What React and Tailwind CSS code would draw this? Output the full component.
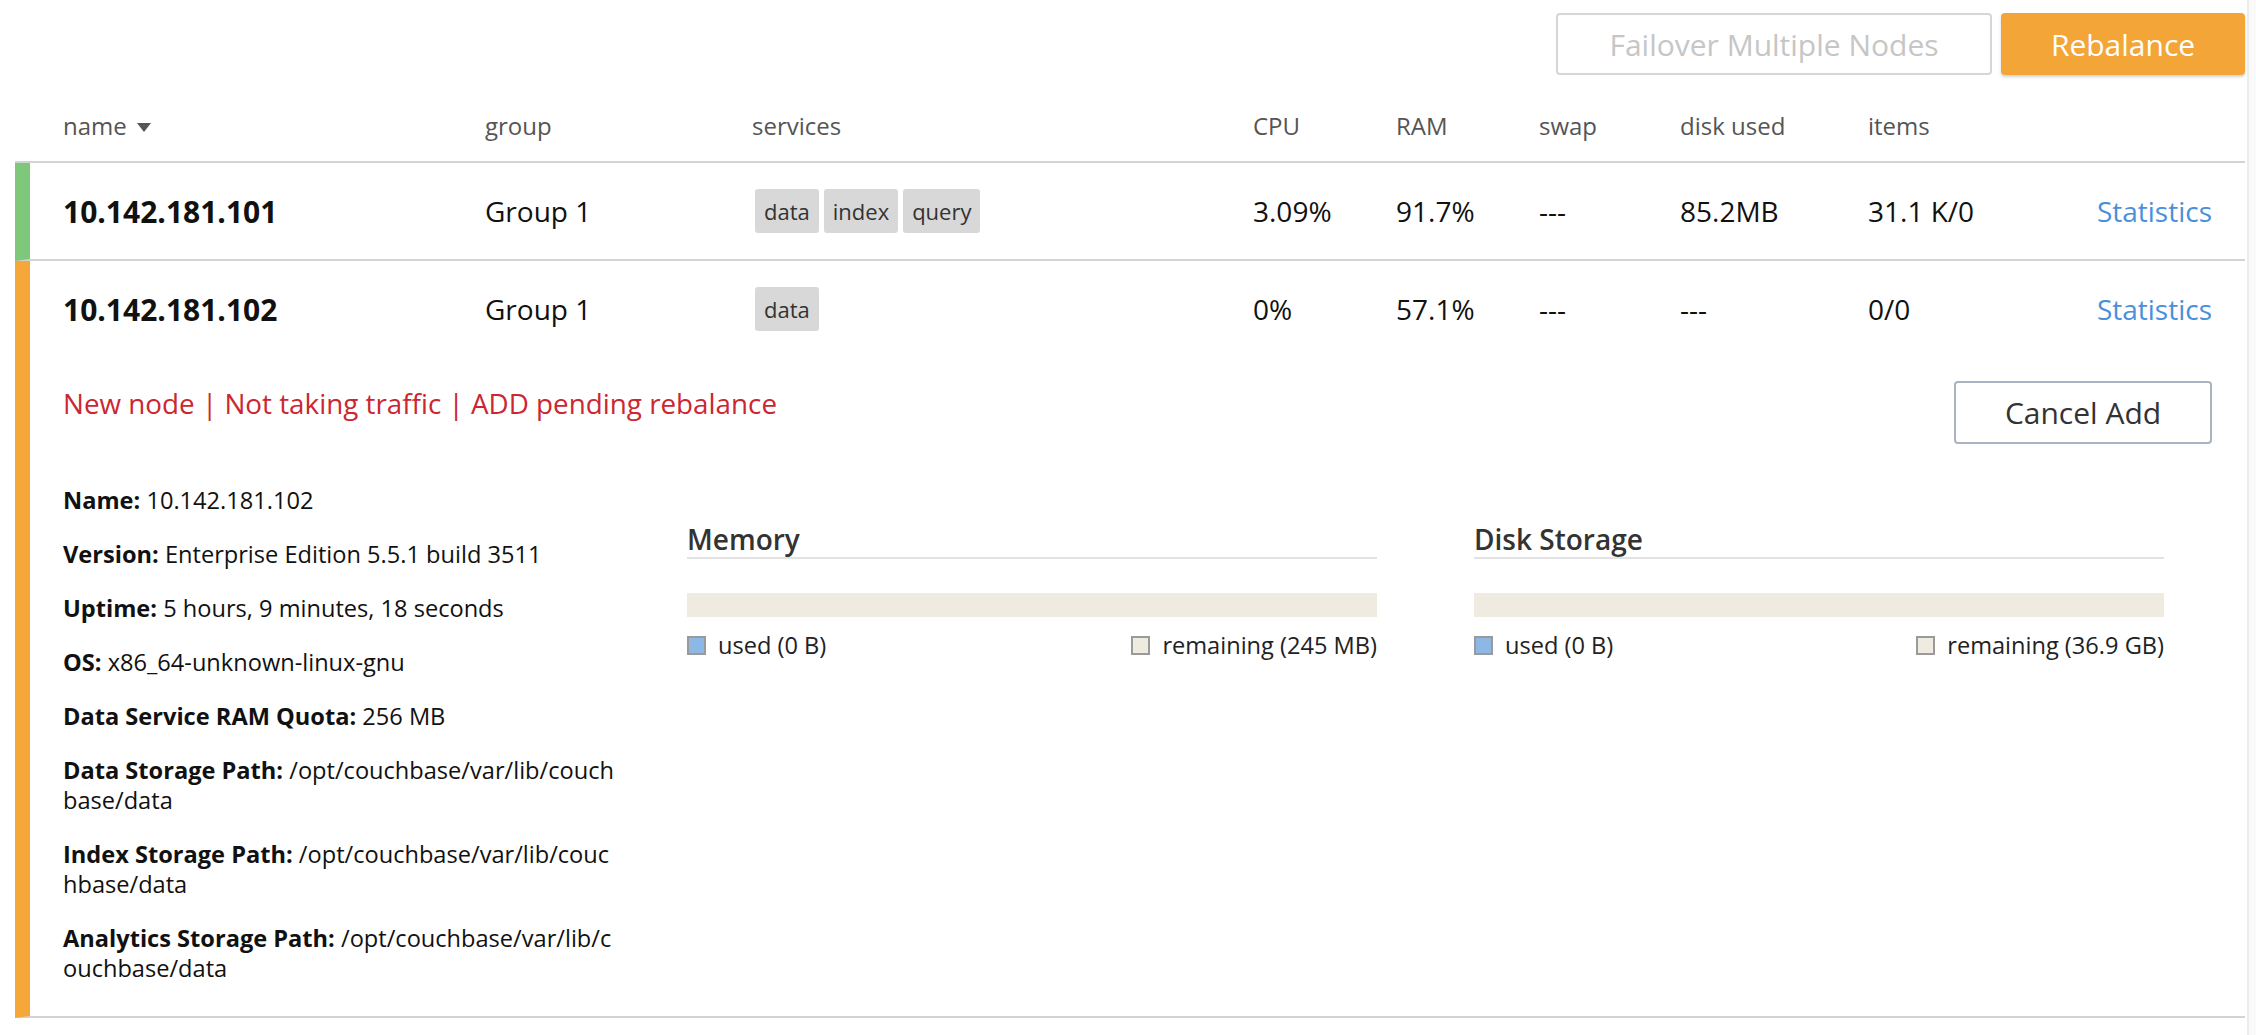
import React from 'react';

const nodes = [
  {
    name: '10.142.181.101',
    group: 'Group 1',
    services: ['data', 'index', 'query'],
    cpu: '3.09%',
    ram: '91.7%',
    swap: '---',
    disk: '85.2MB',
    items: '31.1 K/0',
    status: 'healthy',
  },
  {
    name: '10.142.181.102',
    group: 'Group 1',
    services: ['data'],
    cpu: '0%',
    ram: '57.1%',
    swap: '---',
    disk: '---',
    items: '0/0',
    status: 'pending',
  },
];

const details = [
  { label: 'Name:', lines: ['10.142.181.102'] },
  { label: 'Version:', lines: ['Enterprise Edition 5.5.1 build 3511'] },
  { label: 'Uptime:', lines: ['5 hours, 9 minutes, 18 seconds'] },
  { label: 'OS:', lines: ['x86_64-unknown-linux-gnu'] },
  { label: 'Data Service RAM Quota:', lines: ['256 MB'] },
  { label: 'Data Storage Path:', lines: ['/opt/couchbase/var/lib/couch', 'base/data'] },
  { label: 'Index Storage Path:', lines: ['/opt/couchbase/var/lib/couc', 'hbase/data'] },
  { label: 'Analytics Storage Path:', lines: ['/opt/couchbase/var/lib/c', 'ouchbase/data'] },
];

const Cells = ({ node }) => (
  <div className="flex h-[96px] items-center text-[28px] text-[#111]">
    <div className="w-[422px] text-[30px] font-bold">{node.name}</div>
    <div className="w-[267px]">{node.group}</div>
    <div className="flex w-[501px] gap-[5px] pl-[3px]">
      {node.services.map((s) => (
        <span key={s} className="flex h-[44px] items-center rounded-[3px] bg-[#d8d8d8] px-[9px] text-[22px] text-[#333]">
          {s}
        </span>
      ))}
    </div>
    <div className="w-[143px]">{node.cpu}</div>
    <div className="w-[143px]">{node.ram}</div>
    <div className="w-[141px]">{node.swap}</div>
    <div className="w-[188px]">{node.disk}</div>
    <div className="flex-1">{node.items}</div>
    <a className="text-[#4a8fdb]">Statistics</a>
  </div>
);

const UsageBar = ({ title, remaining }) => (
  <div className="w-[690px] pt-[36px]">
    <h3 className="border-b-2 border-[#e2e2e2] text-[28px] leading-[36px] font-semibold text-[#333]">{title}</h3>
    <div className="mt-[34px] h-[24px] bg-[#efebe1]" />
    <div className="mt-[13px] flex justify-between text-[23.6px] leading-[30px] text-[#222]">
      <div className="flex items-center gap-[12px]">
        <span className="h-[19px] w-[19px] border-2 border-[#9a9a9a] bg-[#8db8e6]" />
        used (0 B)
      </div>
      <div className="flex items-center gap-[12px]">
        <span className="h-[19px] w-[19px] border-2 border-[#9a9a9a] bg-[#efebe1]" />
        remaining ({remaining})
      </div>
    </div>
  </div>
);

export default function App() {
  return (
    <div className="flex min-h-[1035px] w-[2256px] bg-white font-['Open_Sans',sans-serif]">
      <div className="w-[2247px] pt-[13px] pl-[15px] pr-[2px]">
        {/* toolbar */}
        <div className="flex justify-end gap-[9px]">
          <button className="h-[62px] w-[436px] rounded-[4px] border-2 border-[#d6d6d6] bg-white text-[30px] text-[#c6c6c6]">
            Failover Multiple Nodes
          </button>
          <button className="h-[62px] w-[244px] rounded-[4px] bg-[#f4a537] text-[30px] text-white shadow-[0_2px_3px_rgba(0,0,0,0.18)]">
            Rebalance
          </button>
        </div>

        {/* header */}
        <div className="flex border-b-2 border-[#d3d3d3] pt-[37px] pb-[21px] pl-[48px] pr-[33px] text-[24px] leading-[28px] text-[#555]">
          <div className="flex w-[422px] items-center gap-[10px]">
            name
            <svg width="14" height="9" viewBox="0 0 14 9" className="mt-[2px]">
              <path d="M0 0 L14 0 L7 9 Z" fill="#555" />
            </svg>
          </div>
          <div className="w-[267px]">group</div>
          <div className="w-[501px]">services</div>
          <div className="w-[143px]">CPU</div>
          <div className="w-[143px]">RAM</div>
          <div className="w-[141px]">swap</div>
          <div className="w-[188px]">disk used</div>
          <div className="flex-1">items</div>
        </div>

        {/* node 1 */}
        <div className="border-b-2 border-l-[15px] border-b-[#d3d3d3] border-l-[#7fc77b] pl-[33px] pr-[33px]">
          <Cells node={nodes[0]} />
        </div>

        {/* node 2, expanded */}
        <div className="border-b-2 border-l-[15px] border-b-[#d3d3d3] border-l-[#f5a73a] pl-[33px] pr-[33px] pb-[33px]">
          <Cells node={nodes[1]} />
          <div className="flex items-start justify-between pt-[24px]">
            <div className="mt-[7px] text-[27.8px] leading-[30px] text-[#cc2631]">
              New node | Not taking traffic | ADD pending rebalance
            </div>
            <button className="h-[63px] w-[258px] rounded-[4px] border-2 border-[#a9b3c1] bg-white text-[30px] text-[#333]">
              Cancel Add
            </button>
          </div>

          <div className="mt-[41px] flex">
            <div className="w-[624px] text-[23.6px] leading-[30px] text-[#111]">
              {details.map((d, i) => (
                <div key={d.label} className={i === 0 ? '' : 'mt-[24px]'}>
                  <span className="font-bold">{d.label}</span> {d.lines[0]}
                  {d.lines.slice(1).map((l) => (
                    <div key={l}>{l}</div>
                  ))}
                </div>
              ))}
            </div>
            <UsageBar title="Memory" remaining="245 MB" />
            <div className="w-[97px]" />
            <UsageBar title="Disk Storage" remaining="36.9 GB" />
          </div>
        </div>
      </div>

      {/* scrollbar strip */}
      <div className="w-[9px] border-l-2 border-[#ececec] bg-[#fafafa]" />
    </div>
  );
}
